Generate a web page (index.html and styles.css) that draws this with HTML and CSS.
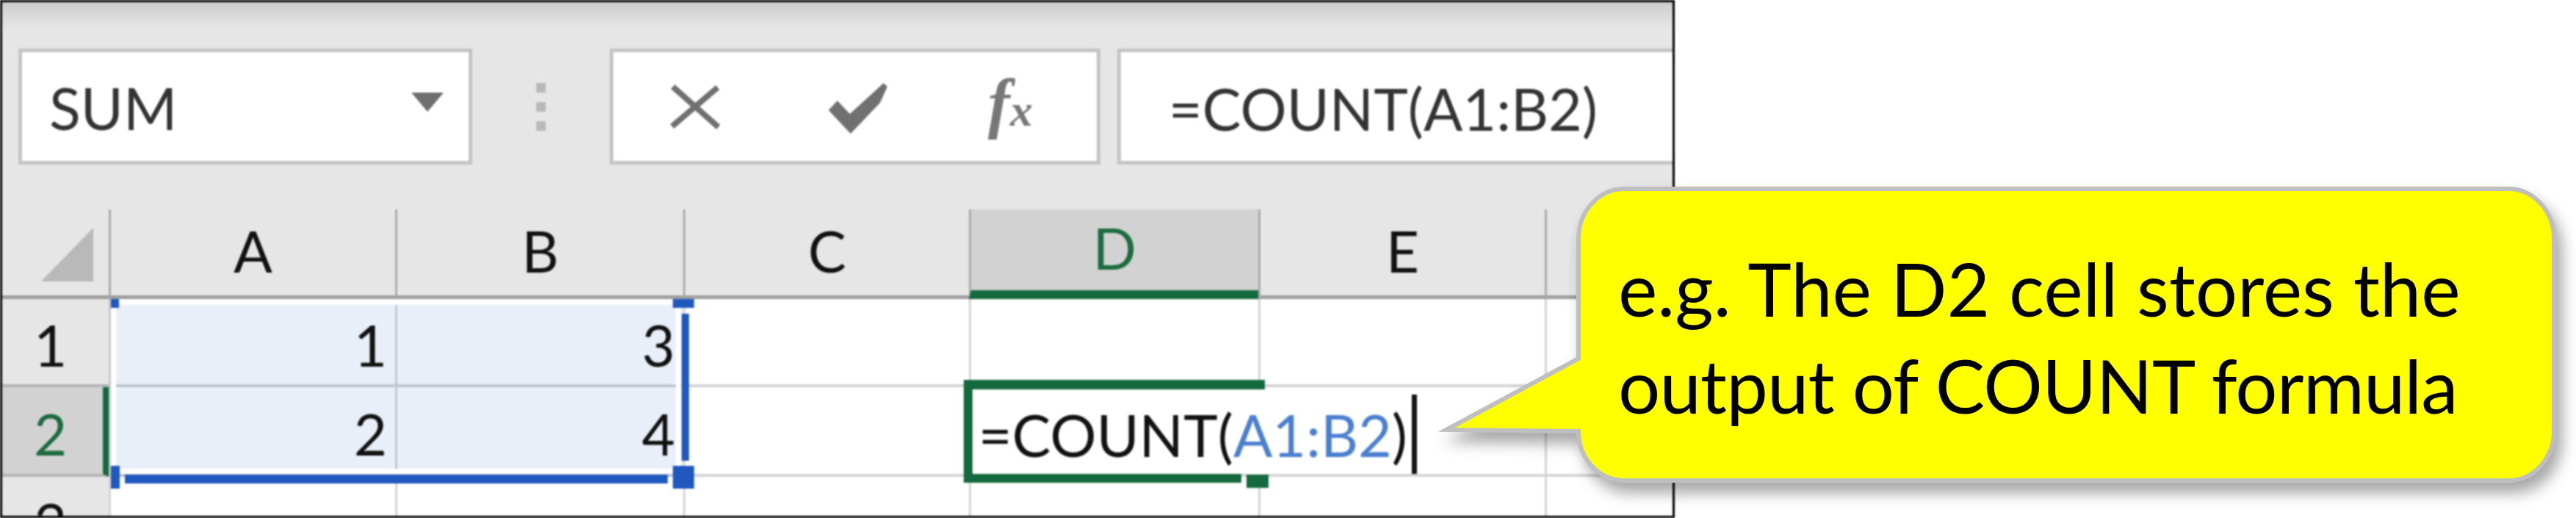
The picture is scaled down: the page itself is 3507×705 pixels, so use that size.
FILE: index.html
```html
<!DOCTYPE html>
<html lang="en">
<head>
  <meta charset="UTF-8">
  <title>COUNT formula</title>
  <link rel="stylesheet" href="styles.css">
</head>
<body>
  <div class="sheet-frame">
    <div class="formula-bar">
      <div class="name-box">
        <span class="name-text">SUM</span>
        <svg class="name-arrow" width="44" height="26" viewBox="0 0 44 26"><path d="M0 0H44L22 26Z" fill="#6d6e70"/></svg>
      </div>
      <div class="grip"><i></i><i></i><i></i></div>
      <div class="fx-box">
        <svg class="cancel-icon" width="68" height="61" viewBox="0 0 68 61"><path d="M4 3L66 58M65 4L3 57" stroke="#707070" stroke-width="8" fill="none"/></svg>
        <svg class="enter-icon" width="80" height="70" viewBox="0 0 80 70"><path d="M0 37L12 24L29 42L75 0L80 5L70 27L30 69Z" fill="#707070"/></svg>
        <span class="fx-label"><span class="fx-f">f</span><span class="fx-x">x</span></span>
      </div>
      <div class="formula-input">=COUNT(A1:B2)</div>
    </div>

    <div class="grid">
      <div class="head corner"><span class="corner-tri"></span></div>
      <div class="head col">A</div>
      <div class="head col">B</div>
      <div class="head col">C</div>
      <div class="head col active-col">D</div>
      <div class="head col">E</div>
      <div class="head col last"></div>

      <div class="head row">1</div>
      <div class="cell sel">1</div>
      <div class="cell sel">3</div>
      <div class="cell"></div>
      <div class="cell"></div>
      <div class="cell"></div>
      <div class="cell last"></div>

      <div class="head row active-row">2</div>
      <div class="cell sel">2</div>
      <div class="cell sel">4</div>
      <div class="cell"></div>
      <div class="cell"></div>
      <div class="cell"></div>
      <div class="cell last"></div>

      <div class="head row">3</div>
      <div class="cell"></div>
      <div class="cell"></div>
      <div class="cell"></div>
      <div class="cell"></div>
      <div class="cell"></div>
      <div class="cell last"></div>
    </div>

    <!-- range marker for A1:B2 -->
    <div class="range-halo"></div>
    <div class="range-right"></div>
    <div class="range-bottom"></div>
    <div class="range-dot dot-tl"></div>
    <div class="range-dot dot-tr"></div>
    <div class="range-dot dot-bl"></div>
    <div class="range-dot dot-br"></div>

    <!-- cell being edited -->
    <div class="edit-cell">=COUNT(<span class="ref">A1:B2</span>)<span class="caret"></span></div>
    <div class="edit-handle"></div>
  </div>

  <div class="callout">
    <svg class="callout-shape" width="1520" height="400" viewBox="0 0 1520 400">
      <path d="M246 0H1450A62 68 0 0 1 1512 68V330A62 68 0 0 1 1450 397H246A62 67 0 0 1 184 330L4 328L184 231V68A62 68 0 0 1 246 0Z" fill="#ffff00" stroke="#bfbfbf" stroke-width="6"/>
    </svg>
    <p class="callout-text">e.g. The D2 cell stores the<br><span class="callout-second">output of COUNT formula</span></p>
  </div>
</body>
</html>
```

FILE: styles.css
```css
body {
  margin: 0;
  background: white;
  font-family: Lato, "Open Sans", sans-serif;
  color: #111;
  overflow: hidden;
}

.sheet-frame {
  position: relative;
  width: 2280px;
  height: 705px;
  box-sizing: border-box;
  border: 3px solid #000;
  overflow: hidden;
  background: white;
  filter: blur(0.8px);
}

/* formula bar */
.formula-bar {
  height: 282px;
  box-sizing: border-box;
  padding-top: 63px;
  padding-left: 22px;
  display: flex;
  align-items: flex-start;
  background: linear-gradient(#cdcdcd 0, #e6e6e6 36px);
}

.name-box,
.fx-box,
.formula-input {
  height: 158px;
  box-sizing: border-box;
  background: #fff;
  border: 5px solid #c4c4c4;
  display: flex;
  align-items: center;
}

.name-box {
  width: 618px;
  padding: 0 34px 0 37px;
  justify-content: space-between;
}

.name-text,
.formula-input {
  font-size: 79px;
  color: #333;
}

.name-text {
  padding-top: 2px;
}

.name-arrow {
  margin-bottom: 12px;
}

.grip {
  width: 187px;
  display: flex;
  flex-direction: column;
  align-items: center;
  gap: 13px;
  padding-top: 47px;
}

.grip i {
  display: block;
  width: 13px;
  height: 13px;
  background: #b9b9b9;
}

.fx-box {
  width: 668px;
  padding-left: 77px;
}

.enter-icon {
  margin: 6px 0 0 148px;
}

.fx-label {
  margin: 0 0 10px 137px;
  font-family: "Liberation Serif", serif;
  font-style: italic;
  font-weight: bold;
  color: #777;
}

.fx-f {
  font-size: 90px;
}

.fx-x {
  font-size: 62px;
}

.formula-input {
  margin-left: 23px;
  flex: 1;
  border-right: none;
  padding: 4px 0 0 65px;
}

/* spreadsheet */
.grid {
  display: grid;
  grid-template-columns: 145px 390px 392px 389px 394px 390px 1fr;
  grid-template-rows: 122px 120px 122px 122px;
  height: 417px;
  overflow: hidden;
}

.head,
.cell {
  font-size: 78px;
  display: flex;
  box-sizing: border-box;
}

.head {
  background: #e6e6e6;
  align-items: center;
  justify-content: center;
  color: #111;
}

.col {
  border-left: 3px solid #ababab;
  border-bottom: 5px solid #9f9f9f;
  padding-bottom: 6px;
}

.corner {
  border-bottom: 5px solid #9f9f9f;
  justify-content: flex-start;
  align-items: flex-start;
}

.corner-tri {
  display: block;
  margin: 25px 0 0 53px;
  width: 71px;
  height: 73px;
  background: #b9b9b9;
  clip-path: polygon(100% 0, 100% 100%, 0 100%);
}

.active-col {
  background: #d2d2d2;
  border-bottom: 12px solid #136a3c;
  color: #1d6b3f;
}

.row {
  border-bottom: 4px solid #b3b3b3;
  padding: 8px 14px 0 0;
}

.active-row {
  background: #d2d2d2;
  color: #1d6b3f;
  border-right: 8px solid #136a3c;
  padding-right: 6px;
}

.cell {
  border-left: 3px solid #d4d4d4;
  border-bottom: 4px solid #d4d4d4;
  justify-content: flex-end;
  align-items: center;
  padding: 8px 11px 0 0;
}

.cell.sel {
  background: #e9eff8;
  border-left-color: #c5c8cc;
  border-bottom-color: #bfc4cc;
}

.cell.last {
  padding: 0;
}

/* A1:B2 marker */
.range-halo {
  position: absolute;
  left: 148px;
  top: 404px;
  width: 776px;
  height: 238px;
  box-sizing: border-box;
  border: 7px solid #fff;
  border-top-width: 8px;
}

.range-right,
.range-bottom,
.range-dot {
  position: absolute;
  background: #2058c0;
}

.range-right {
  left: 925px;
  top: 424px;
  width: 10px;
  height: 200px;
}

.range-bottom {
  left: 167px;
  top: 643px;
  width: 739px;
  height: 12px;
}

.dot-tl { left: 148px; top: 404px; width: 11px; height: 12px; }
.dot-tr { left: 913px; top: 404px; width: 29px; height: 12px; }
.dot-bl { left: 148px; top: 631px; width: 12px; height: 31px; }
.dot-br { left: 913px; top: 631px; width: 29px; height: 31px; }

/* D2 being edited */
.edit-cell {
  position: absolute;
  left: 1309px;
  top: 514px;
  width: 622px;
  height: 140px;
  box-sizing: border-box;
  padding: 8px 0 0 8px;
  display: flex;
  align-items: center;
  font-size: 79px;
  color: #111;
  background: linear-gradient(to right, #fff, #fff) no-repeat 0 13px / 100% 115px;
  border-left: 12px solid #136a3c;
  white-space: pre;
}

.edit-cell::before {
  content: "";
  position: absolute;
  left: -12px;
  top: 0;
  width: 410px;
  height: 13px;
  background: #136a3c;
}

.edit-cell::after {
  content: "";
  position: absolute;
  left: -12px;
  bottom: 0;
  width: 378px;
  height: 12px;
  background: #136a3c;
}

.ref {
  color: #4a7fd0;
}

.caret {
  position: absolute;
  left: 598px;
  top: 20px;
  width: 7px;
  height: 108px;
  background: #111;
}

.edit-handle {
  position: absolute;
  left: 1694px;
  top: 643px;
  width: 30px;
  height: 18px;
  background: #136a3c;
}

/* yellow note on top of the sheet */
.callout {
  position: absolute;
  left: 1965px;
  top: 257px;
  width: 1520px;
  height: 400px;
}

.callout-shape {
  display: block;
  overflow: visible;
  filter: drop-shadow(8px 14px 10px rgba(0, 0, 0, 0.35));
}

.callout-text {
  position: absolute;
  left: 238px;
  top: 69px;
  margin: 0;
  font-size: 101px;
  line-height: 132px;
  color: #000;
  white-space: nowrap;
}

.callout-second {
  letter-spacing: -0.85px;
}
```
